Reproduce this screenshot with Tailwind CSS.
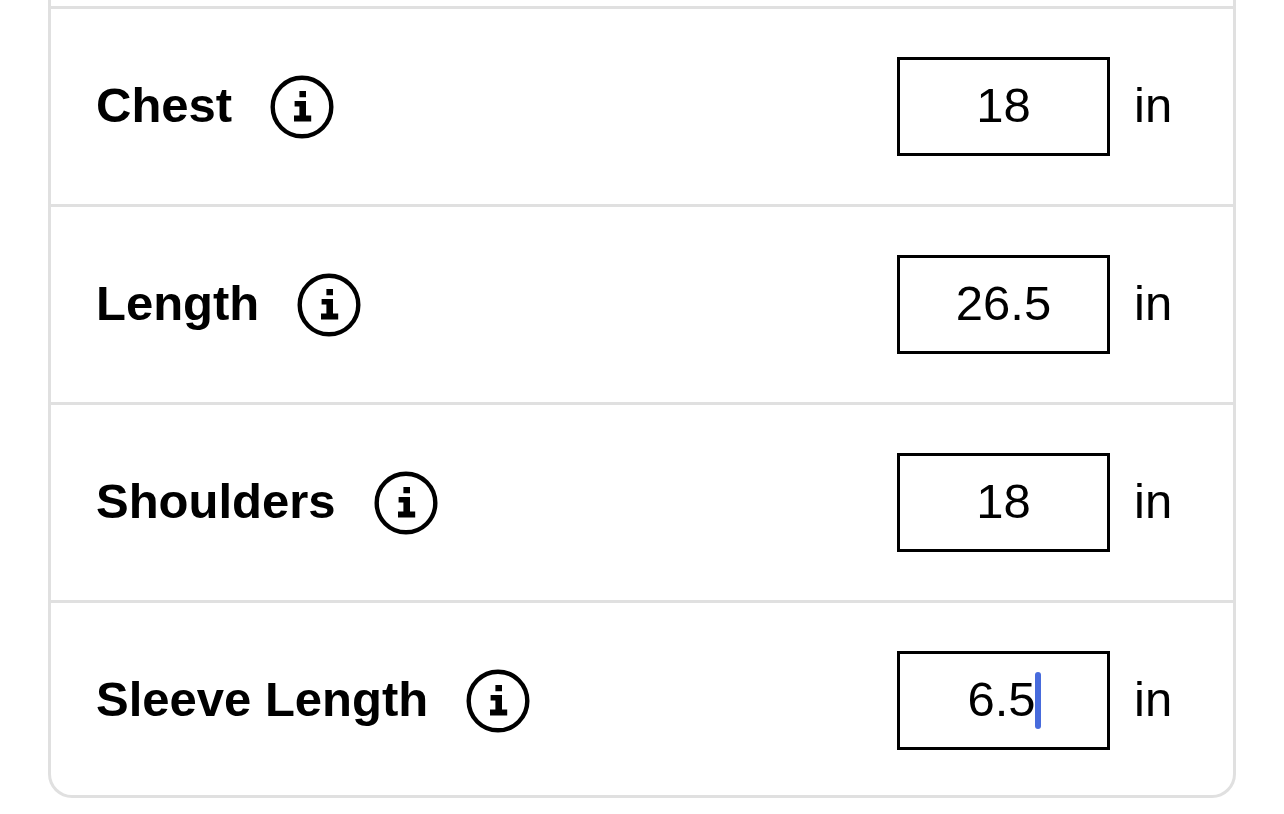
<!DOCTYPE html>
<html lang="en">
<head>
  <meta charset="UTF-8" />
  <meta name="viewport" content="width=device-width, initial-scale=1" />
  <title>Measurements</title>
  <script src="https://cdn.jsdelivr.net/npm/@tailwindcss/browser@4"></script>
</head>
<body class="bg-white text-black font-['Liberation_Sans',Arial,sans-serif] text-[49px] leading-[56px]">
  <!-- Info icon, shared by all rows -->
  <svg class="hidden" aria-hidden="true">
    <symbol id="info" viewBox="0 0 64 64">
      <circle cx="32" cy="32" r="29.3" fill="none" stroke="currentColor" stroke-width="4.4" />
      <path fill="currentColor" d="M29.4 16h6.6v6.3h-6.6zM24.6 26h11.4v14.6h5.2v6H24v-6h5.4v-9h-4.8z" />
    </symbol>
  </svg>

  <form class="mx-12 pt-[6px] border-x-3 border-b-3 border-[#e0e0e0] rounded-b-3xl">
    <!-- Chest -->
    <div class="flex items-center border-t-3 border-[#e0e0e0] px-[45px] py-12">
      <label for="chest" class="pb-1 font-bold">Chest</label>
      <button type="button" aria-label="About chest" class="ml-[38px]">
        <svg class="size-16"><use href="#info" /></svg>
      </button>
      <input id="chest" type="text" inputmode="decimal" value="18" class="ml-auto w-[213px] h-[99px] border-3 border-black pb-1 text-center outline-none" />
      <span class="ml-6 w-[54px] pb-1">in</span>
    </div>

    <!-- Length -->
    <div class="flex items-center border-t-3 border-[#e0e0e0] px-[45px] py-12">
      <label for="length" class="pb-1 font-bold">Length</label>
      <button type="button" aria-label="About length" class="ml-[38px]">
        <svg class="size-16"><use href="#info" /></svg>
      </button>
      <input id="length" type="text" inputmode="decimal" value="26.5" class="ml-auto w-[213px] h-[99px] border-3 border-black pb-1 text-center outline-none" />
      <span class="ml-6 w-[54px] pb-1">in</span>
    </div>

    <!-- Shoulders -->
    <div class="flex items-center border-t-3 border-[#e0e0e0] px-[45px] py-12">
      <label for="shoulders" class="pb-1 font-bold">Shoulders</label>
      <button type="button" aria-label="About shoulders" class="ml-[38px]">
        <svg class="size-16"><use href="#info" /></svg>
      </button>
      <input id="shoulders" type="text" inputmode="decimal" value="18" class="ml-auto w-[213px] h-[99px] border-3 border-black pb-1 text-center outline-none" />
      <span class="ml-6 w-[54px] pb-1">in</span>
    </div>

    <!-- Sleeve length, being edited -->
    <div class="flex items-center border-t-3 border-[#e0e0e0] px-[45px] pt-12 pb-[45px]">
      <label for="sleeve" class="pb-1 font-bold">Sleeve Length</label>
      <button type="button" aria-label="About sleeve length" class="ml-[38px]">
        <svg class="size-16"><use href="#info" /></svg>
      </button>
      <div class="relative ml-auto">
        <input id="sleeve" type="text" inputmode="decimal" value="6.5" class="block w-[213px] h-[99px] border-3 border-black pr-1 pb-1 text-center outline-none" />
        <span class="absolute right-[69px] top-[21px] h-[57px] w-[6px] rounded-full bg-[#476bdc]"></span>
      </div>
      <span class="ml-6 w-[54px] pb-1">in</span>
    </div>
  </form>
</body>
</html>
